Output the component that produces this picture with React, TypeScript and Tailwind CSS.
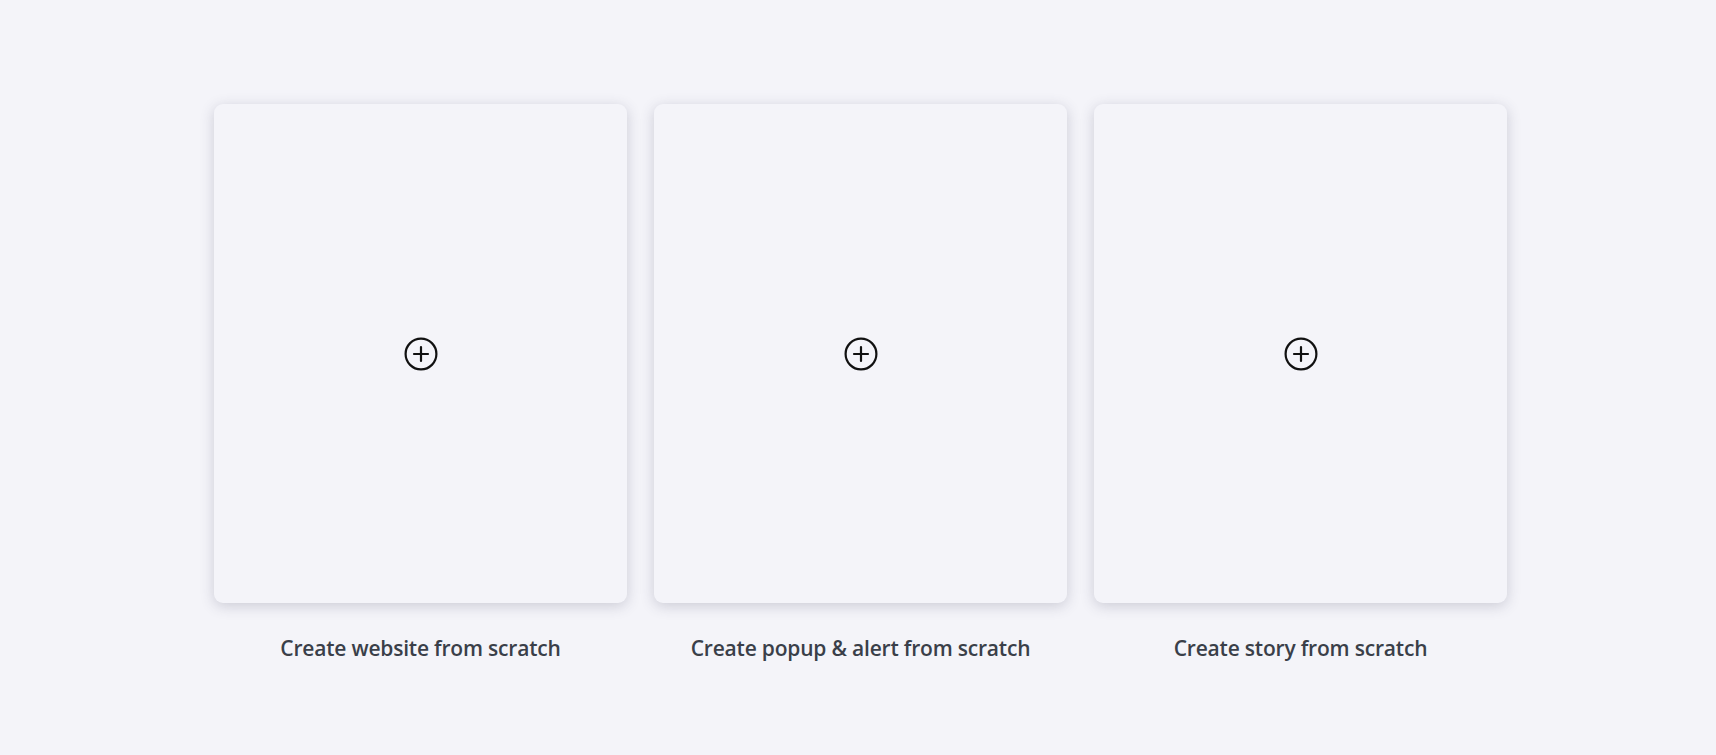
import React from 'react'

const templates = [
  { id: 'website', label: 'Create website from scratch' },
  { id: 'popup', label: 'Create popup & alert from scratch' },
  { id: 'story', label: 'Create story from scratch' },
]

function PlusCircle() {
  return (
    <svg width="34" height="34" viewBox="0 0 34 34" fill="none" stroke="#111" strokeWidth="2.2" strokeLinecap="round">
      <circle cx="17" cy="17" r="15.4" />
      <path d="M10 17h14M17 10v14" />
    </svg>
  )
}

export default function App() {
  return (
    <div className="min-h-[755px] w-full bg-[#f4f4f9] flex justify-center pt-[104px] pl-[5px]" style={{ fontFamily: '"Open Sans", "Noto Sans", sans-serif' }}>
      <div className="grid grid-cols-[413px_413px_413px] gap-x-[27px]">
        {templates.map((t) => (
          <div key={t.id} className="flex flex-col items-center">
            {/* blank template card */}
            <button className="w-full h-[499px] rounded-[9px] bg-[#f4f4f9] shadow-[0_3px_14px_rgba(60,60,90,0.22)] flex items-center justify-center cursor-pointer">
              <PlusCircle />
            </button>
            <div className="mt-[33px] text-[21px] leading-6 text-[#3a3f49] font-semibold tracking-[-0.2px]">{t.label}</div>
          </div>
        ))}
      </div>
    </div>
  )
}
